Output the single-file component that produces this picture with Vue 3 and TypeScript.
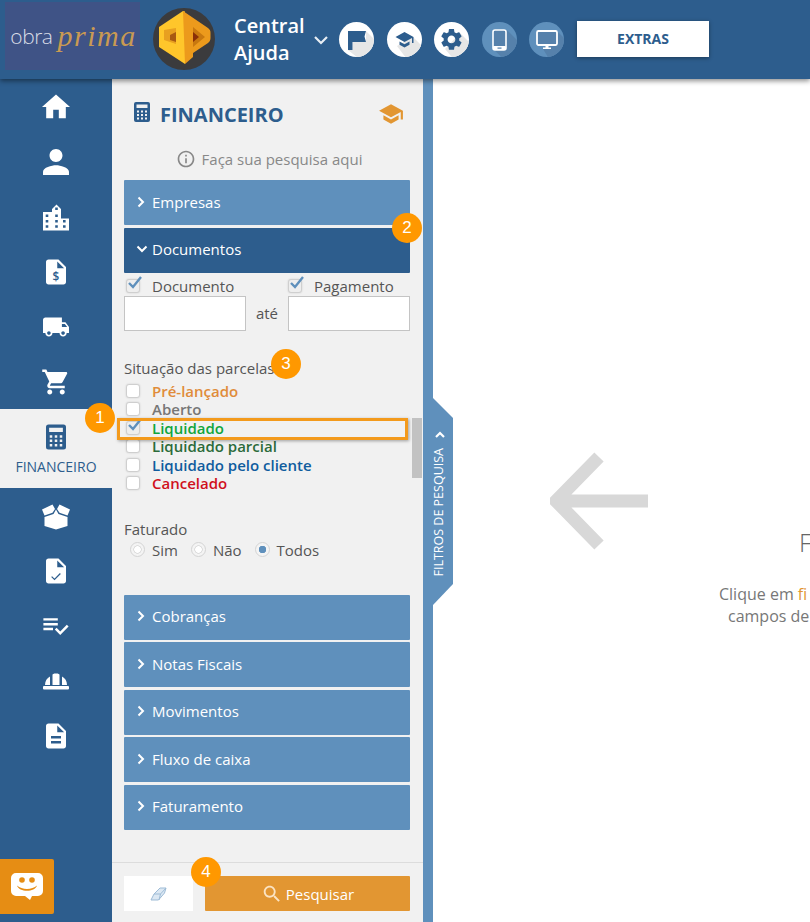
<template>
  <div class="page">
    <header class="topbar">
      <div class="brand"><span class="brand-a">obra</span><span class="brand-b">prima</span></div>
      <svg class="mark" width="62" height="62" viewBox="0 0 62 62">
        <circle cx="31" cy="31" r="31" fill="#3b3b3d" />
        <path d="M32 3.500 30 3 6 19v20l26 17z" fill="#ffc62b" />
        <path d="M30 3l25 17c2 1.500 2.500 3 2.500 5v5c0 2-1 4-2.500 5L40 45v4l-8 7z" fill="#ec9a1c" />
        <path d="M11 22l12-2v16l-12-4z" fill="#e8a020" />
        <path d="M17 27l6-3v10l-6-2z" fill="#a85a12" />
        <path d="M40 19l12 10-12 10z" fill="#c8780f" />
        <path d="M40 24l6 5-6 5z" fill="#8a2f08" />
      </svg>
      <div class="central">Central<br />Ajuda</div>
      <svg class="central-chev" width="16" height="10" viewBox="0 0 16 10"><path d="M2 2l6 6 6-6" fill="none" stroke="#e8eef4" stroke-width="2.200" /></svg>
      <div class="round-row">
        <span class="round">
          <svg width="35" height="35" viewBox="0 0 35 35">
            <path d="M27 9l13 13v18H24L9 28h4.500v-8H27z" fill="#e6e6e6" />
            <path d="M9 9h18l-1.500 5.500L27 20H13.500v8H9z" fill="#2d5d8d" />
          </svg>
        </span>
        <span class="round">
          <svg width="35" height="35" viewBox="0 0 35 35">
            <path d="M26 15l14 14v11H22L10 24z" fill="#e6e6e6" />
            <path d="M12.500 19.500v3.200L17.500 25.500l5-2.800v-3.200l-5 2.800zM17.500 10 8.500 15l9 5 7.500-4.100V21h1.500v-6z" fill="#2d5d8d" />
          </svg>
        </span>
        <span class="round">
          <svg width="35" height="35" viewBox="0 0 35 35">
            <path d="M26 11l14 14v15H22L11 27z" fill="#e6e6e6" />
            <g transform="translate(4.500 4.500) scale(1.080)"><path :d="gear" fill="#2d5d8d" /></g>
          </svg>
        </span>
        <span class="round blue">
          <svg width="35" height="35" viewBox="0 0 35 35">
            <path d="M25 8l15 15v17H25L11 27z" fill="#5681ab" />
            <rect x="11" y="8" width="13" height="20" rx="2" fill="#5681ab" stroke="#fff" stroke-width="1.600" />
            <rect x="11" y="24" width="13" height="4" rx="1" fill="#fff" />
            <rect x="15.500" y="25.500" width="4" height="1.200" fill="#5681ab" />
          </svg>
        </span>
        <span class="round blue">
          <svg width="35" height="35" viewBox="0 0 35 35">
            <path d="M28 9l12 12v19H22L14 27l8-3h6z" fill="#5681ab" />
            <rect x="8" y="9" width="20" height="14" rx="1.500" fill="#5681ab" stroke="#fff" stroke-width="1.800" />
            <path d="M16.500 23h3v2.500h2.500V27h-8v-1.500h2.500z" fill="#fff" />
          </svg>
        </span>
      </div>
      <button class="extras">EXTRAS</button>
    </header>

    <div class="main">
      <nav class="sidebar">
        <div v-for="item in navItems" :key="item.id" class="nav-item" :class="{ active: item.label }">
          <svg width="30" height="30" :viewBox="item.vb">
            <path :d="item.d" fill-rule="evenodd" />
            <path v-if="item.stroke" :d="item.stroke" class="nav-stroke" />
            <text v-if="item.sign" x="12" y="19.500" class="nav-sign">{{ item.sign }}</text>
          </svg>
          <span v-if="item.label" class="nav-label">{{ item.label }}</span>
        </div>
      </nav>

      <section class="panel">
        <div class="panel-title">
          <svg class="title-icon" width="24" height="24" viewBox="0 0 24 24"><path :d="calculator" fill-rule="evenodd" /></svg>
          <h1>FINANCEIRO</h1>
          <svg class="title-cap" width="26" height="26" viewBox="0 0 24 24"><path :d="school" /></svg>
        </div>
        <div class="panel-info">
          <svg width="20" height="20" viewBox="0 0 24 24"><path :d="info" /></svg>
          <span>Faça sua pesquisa aqui</span>
        </div>

        <div class="acc acc-light">
          <svg width="10" height="12" viewBox="0 0 10 12"><path d="M2.500 1.500 7 6l-4.500 4.500" /></svg>Empresas
        </div>
        <div class="acc acc-dark">
          <svg width="12" height="10" viewBox="0 0 12 10"><path d="M1.500 2.500 6 7l4.500-4.500" /></svg>Documentos
        </div>

        <div class="doc-body">
          <div class="date-grid">
            <label class="check-row"><span class="box on"><svg width="18" height="16" viewBox="0 0 18 16"><path d="M3 8l4 4 8-10" /></svg></span>Documento</label>
            <span></span>
            <label class="check-row second-check"><span class="box on"><svg width="18" height="16" viewBox="0 0 18 16"><path d="M3 8l4 4 8-10" /></svg></span>Pagamento</label>
            <div class="input"></div>
            <span class="ate">até</span>
            <div class="input"></div>
          </div>

          <div class="group-title">Situação das parcelas</div>
          <div class="status-list">
            <label v-for="s in statuses" :key="s.label" class="check-row status" :style="{ color: s.color }">
              <span class="box" :class="{ on: s.on }"><svg v-if="s.on" width="18" height="16" viewBox="0 0 18 16"><path d="M3 8l4 4 8-10" /></svg></span>{{ s.label }}
            </label>
          </div>

          <div class="group-title fat">Faturado</div>
          <div class="radios">
            <label v-for="r in radios" :key="r.label" class="radio-row"><span class="radio" :class="{ on: r.on }"></span>{{ r.label }}</label>
          </div>
        </div>

        <div v-for="name in collapsed" :key="name" class="acc acc-light">
          <svg width="10" height="12" viewBox="0 0 10 12"><path d="M2.500 1.500 7 6l-4.500 4.500" /></svg>{{ name }}
        </div>

        <div class="panel-foot">
          <button class="btn-clear">
            <svg width="17" height="14" viewBox="0 0 17 14">
              <path d="M1 13l3-6 6-6h6l-1.500 5-6 7z" fill="#dce8f3" stroke="#9dbbd6" stroke-width="1" />
              <path d="M4 7h6.500L9 13M10.500 7 16 1" fill="none" stroke="#9dbbd6" stroke-width="1" />
            </svg>
          </button>
          <button class="btn-search">
            <svg width="22" height="22" viewBox="0 0 24 24"><path :d="search" /></svg>Pesquisar
          </button>
        </div>
      </section>

      <div class="strip"></div>

      <section class="content">
        <svg class="big-arrow" width="98" height="98" viewBox="0 0 98 98">
          <path d="M49 5 6 49l43 44M6 49h92" fill="none" stroke="#d8d8d8" stroke-width="13" />
        </svg>
        <div class="hint">
          <div class="hint-title">F</div>
          <p>Clique em <b>fi</b></p>
          <p class="second">campos de</p>
        </div>
      </section>
    </div>

    <div class="tab">
      <svg width="12" height="12" viewBox="0 0 12 12"><path d="M2 8l4-4 4 4" /></svg>
      <span>FILTROS DE PESQUISA</span>
    </div>
    <div class="scroll-thumb"></div>
    <div class="highlight"></div>
    <span v-for="b in badges" :key="b.n" class="badge" :style="{ left: b.x + 'px', top: b.y + 'px' }">{{ b.n }}</span>

    <div class="chat">
      <svg width="32" height="28" viewBox="0 0 32 28">
        <path d="M5 0h22a5 5 0 0 1 5 5v13a5 5 0 0 1-5 5h-6l-2 4-5-4H5a5 5 0 0 1-5-5V5a5 5 0 0 1 5-5z" fill="#fff" />
        <circle cx="11" cy="7" r="2.800" fill="#e68d14" />
        <circle cx="21" cy="7" r="2.800" fill="#e68d14" />
        <path d="M6 12.500c5 4.500 15 4.500 20 0-2 7-18 7-20 0z" fill="#e68d14" />
      </svg>
    </div>
  </div>
</template>

<script setup lang="ts">
interface NavItem {
  id: string
  vb: string
  d: string
  stroke?: string
  sign?: string
  label?: string
}

const gear = 'M19.14 12.94c.04-.3.06-.61.06-.94 0-.32-.02-.64-.07-.94l2.03-1.58c.18-.14.23-.41.12-.61l-1.92-3.32c-.12-.22-.37-.29-.59-.22l-2.39.96c-.5-.38-1.03-.7-1.62-.94l-.36-2.54c-.04-.24-.24-.41-.48-.41h-3.84c-.24 0-.43.17-.47.41l-.36 2.54c-.59.24-1.13.57-1.62.94l-2.39-.96c-.22-.08-.47 0-.59.22L2.74 8.87c-.12.21-.08.47.12.61l2.03 1.58c-.05.3-.09.63-.09.94s.02.64.07.94l-2.03 1.58c-.18.14-.23.41-.12.61l1.92 3.32c.12.22.37.29.59.22l2.39-.96c.5.38 1.03.7 1.62.94l.36 2.54c.05.24.24.41.48.41h3.84c.24 0 .44-.17.47-.41l.36-2.54c.59-.24 1.13-.56 1.62-.94l2.39.96c.22.08.47 0 .59-.22l1.92-3.32c.12-.22.07-.47-.12-.61l-2.01-1.58zM12 15.6c-1.98 0-3.6-1.62-3.6-3.6s1.62-3.6 3.6-3.6 3.6 1.62 3.6 3.6-1.62 3.6-3.6 3.6z'
const school = 'M5 13.18v4L12 21l7-3.82v-4L12 17l-7-3.82zM12 3L1 9l11 6 9-4.91V17h2V9L12 3z'
const info = 'M11 7h2v2h-2zm0 4h2v6h-2zm1-9C6.48 2 2 6.48 2 12s4.48 10 10 10 10-4.48 10-10S17.52 2 12 2zm0 18c-4.41 0-8-3.59-8-8s3.59-8 8-8 8 3.59 8 8-3.59 8-8 8z'
const search = 'M15.5 14h-.79l-.28-.27C15.41 12.59 16 11.11 16 9.5 16 5.91 13.09 3 9.5 3S3 5.91 3 9.5 5.91 16 9.5 16c1.61 0 3.09-.59 4.23-1.57l.27.28v.79l5 4.99L20.49 19l-4.99-5zm-6 0C7.01 14 5 11.99 5 9.500S7.01 5 9.500 5 14 7.010 14 9.500 11.990 14 9.500 14z'
const calculator = 'M6 2h12a2 2 0 0 1 2 2v16a2 2 0 0 1-2 2H6a2 2 0 0 1-2-2V4a2 2 0 0 1 2-2zM6.500 4.500V8h11V4.500zM7 10.500v2h2v-2zM11 10.500v2h2v-2zM15 10.500v2h2v-2zM7 14v2h2v-2zM11 14v2h2v-2zM15 14v2h2v-2zM7 17.500v2h2v-2zM11 17.500v2h2v-2zM15 17.500v2h2v-2z'
const docBase = 'M14 2H6c-1.1 0-1.99.9-1.99 2L4 20c0 1.1.89 2 1.99 2H18c1.1 0 2-.9 2-2V8l-6-6zM13 9V3.500L18.500 9H13z'

const navItems: NavItem[] = [
  { id: 'home', vb: '1.300 1.300 21.400 21.400', d: 'M10 20v-6h4v6h5v-8h3L12 3 2 12h3v8z' },
  { id: 'user', vb: '2.750 2.750 18.500 18.500', d: 'M12 12c2.210 0 4-1.790 4-4s-1.790-4-4-4-4 1.790-4 4 1.790 4 4 4zm0 2c-2.670 0-8 1.340-8 4v2h16v-2c0-2.660-5.330-4-8-4z' },
  { id: 'building', vb: '0 0 30 30', d: 'M2 10h9V7l4.500-4.500L20 7v9.500h8v12H2zM14.200 5.500v2.600h2.600V5.500zM4.700 12.500v2.600h2.600v-2.600zM14.200 12.500v2.600h2.600v-2.600zM4.700 18v2.600h2.600V18zM14.200 18v2.600h2.600V18zM22 18v2.600h2.600V18zM4.700 23.200v2.600h2.600v-2.600zM14.200 23.200v2.600h2.600v-2.600zM22 23.200v2.600h2.600v-2.600z' },
  { id: 'doc-money', vb: '0 0 24 24', d: docBase, sign: '$' },
  { id: 'truck', vb: '-0.700 -0.700 25.400 25.400', d: 'M20 8h-3V4H3c-1.100 0-2 .9-2 2v11h2c0 1.660 1.340 3 3 3s3-1.340 3-3h6c0 1.660 1.340 3 3 3s3-1.340 3-3h2v-5l-3-4zM6 18.500c-.83 0-1.500-.67-1.500-1.500s.67-1.500 1.500-1.500 1.500.67 1.500 1.500-.67 1.500-1.500 1.500zm13.500-9l1.960 2.500H17V9.500h2.500zm-1.500 9c-.83 0-1.500-.67-1.500-1.500s.67-1.500 1.500-1.500 1.500.67 1.500 1.500-.67 1.500-1.500 1.500z' },
  { id: 'cart', vb: '0 0 24 24', d: 'M7 18c-1.100 0-1.990.9-1.990 2S5.900 22 7 22s2-.9 2-2-.9-2-2-2zM1 2v2h2l3.600 7.590-1.350 2.450c-.16.28-.25.61-.25.96 0 1.100.9 2 2 2h12v-2H7.420c-.14 0-.25-.11-.25-.25l.03-.12.9-1.630h7.450c.75 0 1.410-.41 1.750-1.030l3.580-6.490c.08-.14.12-.31.12-.48 0-.55-.45-1-1-1H5.210l-.94-2H1zm16 16c-1.100 0-1.990.9-1.990 2s.89 2 1.990 2 2-.9 2-2-.9-2-2-2z' },
  { id: 'calc', vb: '0 0 24 24', d: calculator, label: 'FINANCEIRO' },
  { id: 'box', vb: '0 0 30 30', d: 'M3.500 16 12.500 13 15 8.500l2.500 4.500 9 3V25L15 28.500 3.500 25zM1 8.500 11.500 3.500 14 8l-2.500 3.800-8 2.700zM29 8.500 18.500 3.500 16 8l2.500 3.800 8 2.700z' },
  { id: 'doc-check', vb: '0 0 24 24', d: docBase, stroke: 'M8.500 16.500l2.300 2.200 4.700-4.700' },
  { id: 'list', vb: '0 0 25 25', d: 'M14 10H2v2h12v-2zm0-4H2v2h12V6zM2 16h8v-2H2v2zm19.500-4.500L23 13l-6.990 7-4.510-4.500L13 14l3.010 3 5.490-5.500z' },
  { id: 'helmet', vb: '0 0 30 30', d: 'M3 20h24a1 1 0 0 1 1 1v1.500a1 1 0 0 1-1 1H3a1 1 0 0 1-1-1V21a1 1 0 0 1 1-1zM4 19c0-4 2-7 5-8.500V19zM11.500 19V9c0-1 1-1.500 3.500-1.500s3.500.5 3.500 1.500v10zM26 19c0-4-2-7-5-8.500V19z' },
  { id: 'doc-lines', vb: '0 0 24 24', d: 'M14 2H6c-1.100 0-1.990.9-1.990 2L4 20c0 1.100.89 2 1.990 2H18c1.100 0 2-.9 2-2V8l-6-6zm2 16H8v-2h8v2zm0-4H8v-2h8v2zm-3-5V3.500L18.500 9H13z' }
]

const statuses = [
  { label: 'Pré-lançado', color: '#e08c3a', on: false },
  { label: 'Aberto', color: '#777777', on: false },
  { label: 'Liquidado', color: '#10a53c', on: true },
  { label: 'Liquidado parcial', color: '#2c6b3a', on: false },
  { label: 'Liquidado pelo cliente', color: '#0f5c9e', on: false },
  { label: 'Cancelado', color: '#d0101c', on: false }
]

const radios = [
  { label: 'Sim', on: false },
  { label: 'Não', on: false },
  { label: 'Todos', on: true }
]

const collapsed = ['Cobranças', 'Notas Fiscais', 'Movimentos', 'Fluxo de caixa', 'Faturamento']

const badges = [
  { n: 1, x: 85, y: 403 },
  { n: 2, x: 392, y: 213 },
  { n: 3, x: 271, y: 349 },
  { n: 4, x: 191, y: 857 }
]
</script>

<style>
html, body { margin: 0; padding: 0; background: #fff; }
</style>

<style scoped>
.page {
  position: relative;
  width: 810px;
  height: 922px;
  overflow: hidden;
  display: flex;
  flex-direction: column;
  font-family: "Open Sans", "Liberation Sans", sans-serif;
  font-size: 15px;
  color: #555;
}

/* top bar */
.topbar {
  position: relative;
  z-index: 2;
  height: 79px;
  flex: none;
  display: flex;
  align-items: center;
  background: #2d5d8d;
  box-shadow: 0 2px 5px rgba(0,0,0,0.45);
}
.brand {
  width: 135px;
  height: 68px;
  margin-left: 5px;
  margin-top: -7px;
  padding-left: 2px;
  box-sizing: border-box;
  background: #3f5386;
  display: flex;
  align-items: center;
  justify-content: center;
  gap: 5px;
}
.brand-a { font-weight: 300; font-size: 21px; color: #d9dce6; letter-spacing: -0.5px; }
.brand-b { font-family: "Liberation Serif", serif; font-style: italic; font-size: 30px; color: #c99a52; letter-spacing: 1.500px; }
.mark { margin-left: 13px; margin-top: -1px; flex: none; }
.central {
  margin-left: 19px;
  margin-top: -2px;
  width: 79px;
  font-size: 20px;
  font-weight: 600;
  line-height: 27px;
  color: #fff;
}
.round-row { display: flex; gap: 12.500px; margin-left: 10px; }
.round {
  width: 35px;
  height: 35px;
  border-radius: 50%;
  overflow: hidden;
  background: #fff;
  display: block;
}
.round svg { display: block; }
.round.blue { background: #5f90bc; }
.extras {
  width: 132px;
  height: 36px;
  margin-left: 13px;
  margin-top: -2px;
  border: 0;
  background: #fff;
  color: #2d5d8d;
  font: 700 14px "Open Sans", sans-serif;
  box-shadow: 0 1px 4px rgba(0,0,0,0.4);
}

.main { flex: 1; display: flex; min-height: 0; }

/* left nav */
.sidebar { width: 112px; flex: none; background: #2d5d8d; }
.nav-item {
  height: 55px;
  display: flex;
  flex-direction: column;
  align-items: center;
  justify-content: center;
  fill: #fff;
}
.nav-item.active {
  height: 79px;
  justify-content: flex-start;
  padding-top: 12.500px;
  box-sizing: border-box;
  background: #f1f1f1;
  fill: #2d5d8d;
}
.nav-stroke { fill: none; stroke: #2d5d8d; stroke-width: 1; }
.nav-sign { fill: #2d5d8d; font: 600 9.500px "Open Sans", sans-serif; text-anchor: middle; }
.nav-label { margin-top: 6px; font-size: 14px; line-height: 18px; color: #2d5d8d; }

/* filter panel */
.panel {
  width: 311px;
  flex: none;
  box-sizing: border-box;
  padding: 0 13px 0 12px;
  background: #f1f1f1;
  display: flex;
  flex-direction: column;
}
.panel-title { display: flex; align-items: center; height: 30px; margin-top: 20px; color: #2d5d8d; }
.title-icon { fill: #2d5d8d; margin-left: 6px; margin-top: -4px; }
.panel-title h1 { margin: 0 0 0 6px; font-size: 20px; font-weight: 700; }
.title-cap { fill: #e29632; margin-left: auto; margin-right: 6px; }
.panel-info {
  height: 22px;
  margin: 19px 0 10px;
  padding-left: 4px;
  display: flex;
  align-items: center;
  justify-content: center;
  gap: 6px;
  color: #888;
  fill: #888;
}
.acc {
  height: 45px;
  flex: none;
  margin-bottom: 2.500px;
  box-sizing: border-box;
  padding: 0 0 2px 12px;
  display: flex;
  align-items: center;
  gap: 6px;
  color: #fff;
  border-radius: 1px;
}
.acc svg { fill: none; stroke: #fff; stroke-width: 2; }
.acc-light { background: #5f90bc; }
.acc-dark { background: #2d5d8d; margin-bottom: 0; gap: 4px; }

.doc-body { height: 322px; flex: none; }
.date-grid {
  display: grid;
  grid-template-columns: 122px 42px 122px;
  grid-template-rows: 19px 35px;
  padding-top: 4px;
  color: #555;
}
.check-row { display: flex; align-items: center; white-space: nowrap; }
.second-check { margin-left: -2px; }
.box {
  position: relative;
  width: 14px;
  height: 14px;
  margin: 0 12px 0 2px;
  flex: none;
  box-sizing: border-box;
  background: #fff;
  border: 1px solid #cfcfcf;
  border-radius: 3px;
  box-shadow: 0 0 2px rgba(0,0,0,0.15);
}
.box.on { background: #eee; }
.box svg { position: absolute; left: -1px; top: -5px; fill: none; stroke: #5f90bc; stroke-width: 2.400; }
.input { background: #fff; border: 1px solid #c4c4c4; box-sizing: border-box; }
.ate { display: flex; align-items: center; justify-content: center; }
.group-title { margin-top: 27px; line-height: 20px; color: #555; }
.group-title.fat { margin-top: 26px; }
.status-list { margin-top: 4px; }
.status { height: 18.500px; font-weight: 600; }
.radios { display: flex; margin-top: 1px; height: 20px; padding-left: 6px; }
.radio-row { display: flex; align-items: center; margin-right: 13px; }
.radio {
  width: 15px;
  height: 15px;
  margin-right: 7px;
  box-sizing: border-box;
  border-radius: 50%;
  background: radial-gradient(circle, #fff 0 3px, #ddd 3.500px 4px, #f4f4f4 4.500px);
  border: 1px solid #d4d4d4;
}
.radio.on { background: radial-gradient(circle, #5f90bc 0 3.500px, #f4f4f4 4px); }

.panel-foot {
  margin: auto -13px 0 -12px;
  height: 60px;
  flex: none;
  box-sizing: border-box;
  padding: 13px 13px 0 12px;
  border-top: 1px solid #dcdcdc;
  display: flex;
  gap: 12px;
}
.btn-clear { width: 69px; height: 35px; border: 0; background: #fff; padding: 3px 0 0; }
.btn-search {
  width: 205px;
  height: 35px;
  border: 0;
  border-radius: 1px;
  background: #e29632;
  color: #fff;
  font: 15px "Open Sans", sans-serif;
  fill: #fbe3c2;
  display: flex;
  align-items: center;
  justify-content: center;
  gap: 3px;
}

.strip { width: 10px; flex: none; background: #5f90bc; }

/* empty state */
.content {
  flex: 1;
  min-width: 0;
  overflow: hidden;
  box-sizing: border-box;
  padding: 373px 0 0 117px;
  display: flex;
  align-items: flex-start;
  background: #fff;
}
.big-arrow { flex: none; }
.hint { flex: none; margin-left: 71px; padding-top: 75px; white-space: nowrap; color: #777; }
.hint-title { margin-left: 80px; font-size: 25px; font-weight: 300; line-height: 30px; color: #666; }
.hint p { margin: 0; line-height: 22px; font-size: 16px; }
.hint p:first-of-type { margin-top: 26px; }
.hint p.second { margin-left: 9px; }
.hint b { font-weight: 400; color: #e29632; }

/* overlays */
.tab {
  position: absolute;
  left: 433px;
  top: 398px;
  width: 20px;
  height: 207px;
  box-sizing: border-box;
  padding: 31px 6px 0 0;
  background: #5f90bc;
  clip-path: polygon(0 0, 100% 20px, 100% 186px, 0 100%);
  display: flex;
  flex-direction: column;
  align-items: center;
  gap: 7px;
  color: #fff;
  font-size: 12.500px;
}
.tab svg { fill: none; stroke: #fff; stroke-width: 2.200; flex: none; }
.tab span { writing-mode: vertical-rl; transform: rotate(180deg); white-space: nowrap; margin-right: 4px; }
.scroll-thumb { position: absolute; left: 412px; top: 418px; width: 10px; height: 60px; background: #c2c2c2; }
.highlight {
  position: absolute;
  left: 117px;
  top: 418px;
  width: 291px;
  height: 22px;
  box-sizing: border-box;
  border: 3px solid #f39a1c;
  box-shadow: 1px 1px 3px rgba(0,0,0,0.35);
}
.badge {
  position: absolute;
  width: 30px;
  height: 30px;
  border-radius: 50%;
  background: #ff9800;
  color: #fff;
  font: 17px/30px "Liberation Sans", sans-serif;
  text-align: center;
}
.chat {
  position: absolute;
  left: 0;
  top: 859px;
  width: 54px;
  height: 55px;
  background: #e68d14;
  border-radius: 0 2px 2px 0;
  display: flex;
  align-items: center;
  justify-content: center;
}
</style>
